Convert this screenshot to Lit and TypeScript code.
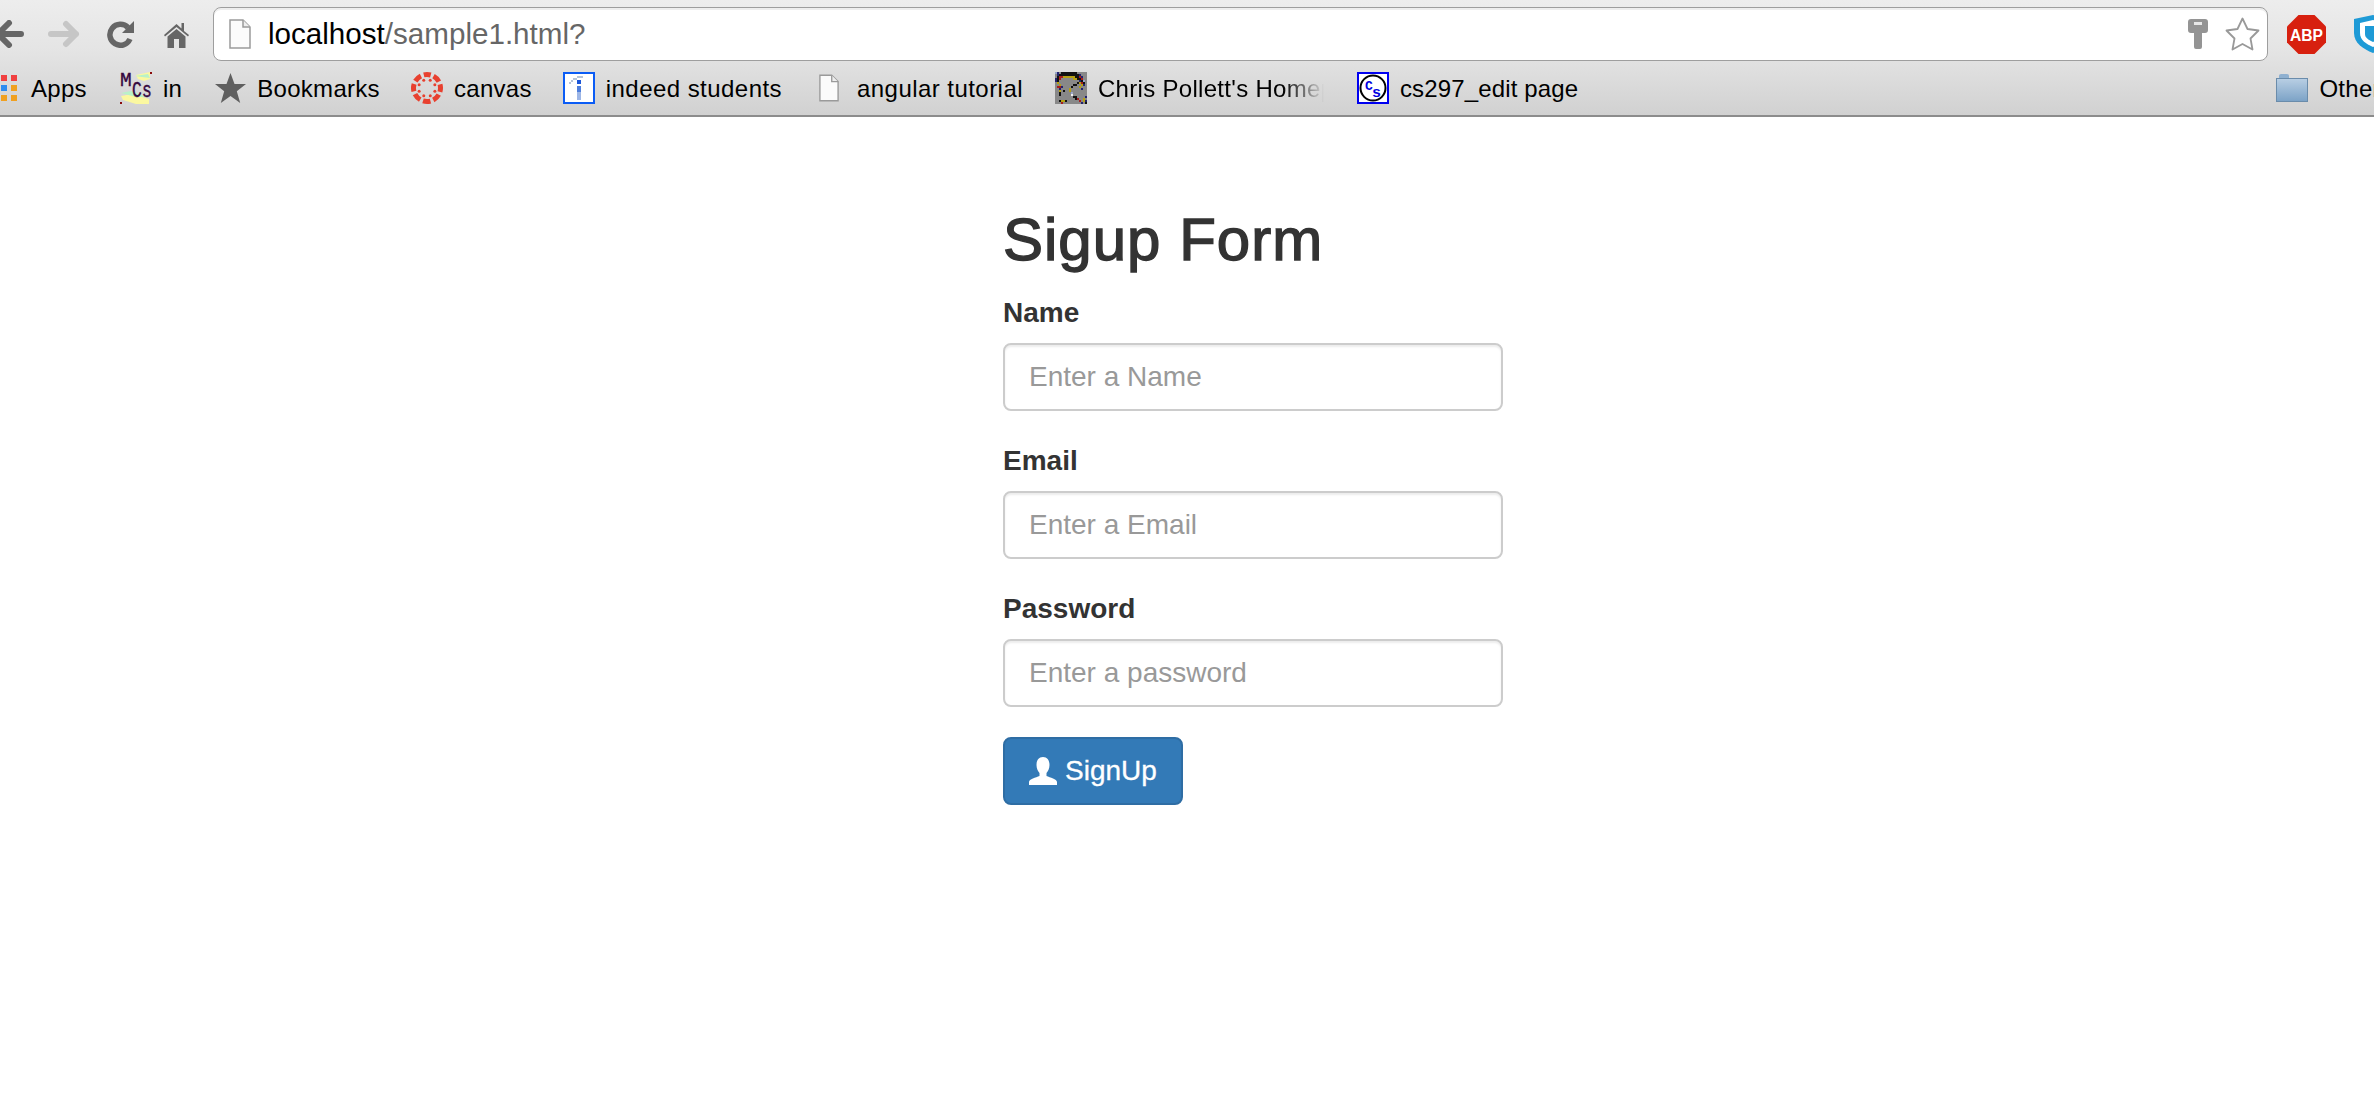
import { LitElement, html, css, svg } from "lit";
import { customElement } from "lit/decorators.js";

const palette: Record<string, string> = {
  k: "#111", r: "#a81c1c", y: "#b5a011", n: "#23236e", w: "#eee", l: "#9aa7c9",
};
const chris = [
  "ln.kkkkkkkk.....",
  ".nkkkkkkkkkkn...",
  ".krryyyyyykkrn..",
  "nkr......yykkr..",
  "nk..........nkl.",
  ".y.........kyrk.",
  "..y......kk..yn.",
  ".rrn....k...y...",
  "..n....y.....n..",
  "..y.k..y........",
  "..k.....l.......",
  "..k.....w.......",
  ".........kk....n",
  "..........kr..y.",
  "..kyyk......r.yn",
  "...r.........n.k",
];

const pixels = (rows: string[]) =>
  rows.flatMap((row, y) =>
    [...row].map((c, x) =>
      c === "." ? null : svg`<rect x=${x} y=${y} width="1" height="1" fill=${palette[c]}></rect>`
    )
  );

const canvasDots = [0, 45, 90, 135, 180, 225, 270, 315];

@customElement("app-root")
export class AppRoot extends LitElement {
  static styles = css`
    :host {
      display: block;
      min-height: 1111px;
      background: #fff;
      font-family: "Liberation Sans", Arial, sans-serif;
      overflow: hidden;
    }
    svg { display: block; flex: none; }
    .chrome {
      height: 117px;
      box-sizing: border-box;
      border-bottom: 2px solid #8c8c8c;
      background: linear-gradient(#ededed 0, #e4e4e4 45%, #d1d1d1 100%);
      display: flex;
      flex-direction: column;
      overflow: hidden;
    }
    .top { height: 68px; flex: none; display: flex; align-items: flex-start; }
    .back { margin: 20px 0 0 -8px; }
    .forward { margin: 20px 0 0 24px; }
    .reload { margin: 20px 0 0 27px; }
    .home { margin: 22px 0 0 30px; }
    .omni {
      margin: 7px 0 0 24px;
      width: 2055px;
      height: 54px;
      flex: none;
      box-sizing: border-box;
      background: #fff;
      border: 1.5px solid #9e9e9e;
      border-radius: 8px;
      box-shadow: inset 0 2px 0 #eeeeee;
      padding: 0 7px 0 15px;
      display: flex;
      align-items: center;
    }
    .url { margin-left: 17px; font-size: 29.6px; color: #000; white-space: nowrap; }
    .url span { color: #666; }
    .key { margin-left: auto; }
    .star { margin-left: 17px; }
    .abp { margin: 15px 0 0 19px; }
    .shield { margin: 15px 0 0 27px; }
    .bar { display: flex; align-items: center; height: 40px; flex: none; }
    .bm { display: flex; align-items: center; gap: 11px; flex: none; margin-right: 33px; font-size: 24px; letter-spacing: 0.3px; color: #000; white-space: nowrap; }
    .bm span { padding-top: 2px; }
    .tight { margin-right: 31px; }
    .wide { letter-spacing: 0.45px; }
    .snug { margin-right: 32px; }
    .apps { margin-left: -9px; gap: 14px; }
    .grid { display: grid; grid-template-columns: repeat(3, 6px); grid-auto-rows: 6px; gap: 4px; }
    .grid i { display: block; }
    .fade {
      width: 226px;
      overflow: hidden;
      -webkit-mask-image: linear-gradient(90deg, #000 82%, transparent 100%);
      mask-image: linear-gradient(90deg, #000 82%, transparent 100%);
    }
    .doc { margin: 0 7px 0 4px; }
    .small { letter-spacing: 0.15px; }
    .other { margin: 0 0 0 665px; }
    main {
      width: 500px;
      margin-left: 1003px;
      color: #333;
    }
    h1 {
      margin: 90px 0 20px;
      font-size: 60px;
      line-height: 66px;
      font-weight: 400;
      letter-spacing: 1px;
      -webkit-text-stroke: 1.4px #333;
    }
    .group { margin-bottom: 30px; }
    label {
      display: block;
      font-size: 28px;
      line-height: 40px;
      font-weight: 700;
      margin-bottom: 10px;
    }
    input {
      display: block;
      width: 100%;
      height: 68px;
      box-sizing: border-box;
      padding: 12px 24px;
      border: 2px solid #ccc;
      border-radius: 8px;
      background: #fff;
      box-shadow: inset 0 2px 2px rgba(0, 0, 0, 0.075);
      font: 28px "Liberation Sans", Arial, sans-serif;
      color: #555;
      outline: none;
    }
    input::placeholder { color: #999; opacity: 1; }
    button {
      display: inline-flex;
      align-items: center;
      height: 68px;
      box-sizing: border-box;
      padding: 0 24px;
      border: 2px solid #2e6da4;
      border-radius: 8px;
      background: #337ab7;
      color: #fff;
      font: 28px "Liberation Sans", Arial, sans-serif;
      -webkit-text-stroke: 0.3px #fff;
      gap: 8px;
    }
  `;

  private docIcon(w: number, h: number, cls = "") {
    return html`<svg class=${cls} width=${w} height=${h} viewBox="0 0 22 30">
      <path d="M1 1H14L21 8V29H1Z" fill="#fbfbfb" stroke="#9a9a9a" stroke-width="1.5"></path>
      <path d="M14 1V8H21" fill="#eee" stroke="#9a9a9a" stroke-width="1.5"></path>
    </svg>`;
  }

  render() {
    return html`
      <div class="chrome">
        <div class="top">
          <svg class="back" width="32" height="28" viewBox="0 0 32 28">
            <path d="M29 14H6M17 3 6 14 17 25" fill="none" stroke="#666" stroke-width="6" stroke-linecap="round" stroke-linejoin="round"></path>
          </svg>
          <svg class="forward" width="32" height="28" viewBox="0 0 32 28">
            <path d="M3 14H28M18 4 28 14 18 24" fill="none" stroke="#c6c6c6" stroke-width="6" stroke-linecap="round" stroke-linejoin="round"></path>
          </svg>
          <svg class="reload" width="27" height="28" viewBox="0 0 27 28">
            <path d="M21 7.5A10.5 10.5 0 1 0 23 19" fill="none" stroke="#666" stroke-width="5.5"></path>
            <path d="M27 1V13H15Z" fill="#666"></path>
          </svg>
          <svg class="home" width="25" height="26" viewBox="0 0 25 26">
            <path d="M0 13 12.5 2 17.5 6.5V1H20V9L25 13 24 14.5 12.5 5 1 14.500Z" fill="#666"></path>
            <path d="M3.500 14.500 12.500 7 21.500 14.500V26H15V17H10V26H3.500Z" fill="#666"></path>
          </svg>
          <div class="omni">
            ${this.docIcon(22, 30)}
            <div class="url">localhost<span>/sample1.html?</span></div>
            <svg class="key" width="20" height="30" viewBox="0 0 20 30">
              <path d="M3 0H17A3 3 0 0 1 20 3V11A3 3 0 0 1 17 14H14V28A2 2 0 0 1 12 30H8A2 2 0 0 1 6 28V14H3A3 3 0 0 1 0 11V3A3 3 0 0 1 3 0Z" fill="#949494"></path>
              <rect x="6" y="3" width="8" height="3" fill="#e8e8e8"></rect>
            </svg>
            <svg class="star" width="35" height="34" viewBox="0 0 35 34">
              <path d="M17.500 1.500 22.500 12 33.500 13.500 25.500 21.500 27.500 32.500 17.500 27 7.500 32.500 9.500 21.500 1.500 13.500 12.500 12Z" fill="#fff" stroke="#999" stroke-width="1.800" stroke-linejoin="round"></path>
            </svg>
          </div>
          <svg class="abp" width="39" height="39" viewBox="0 0 39 39">
            <path d="M11.500 0H27.500L39 11.500V27.500L27.500 39H11.500L0 27.500V11.500Z" fill="#d7200f"></path>
            <text x="19.500" y="25.500" text-anchor="middle" font-family="Liberation Sans" font-weight="700" font-size="16" textLength="33" lengthAdjust="spacingAndGlyphs" fill="#fff">ABP</text>
          </svg>
          <svg class="shield" width="40" height="38" viewBox="0 0 40 38">
            <path d="M1 4 20 0 39 4V18C39 28 30 34 20 38 10 34 1 28 1 18Z" fill="#1e9ad6"></path>
            <path d="M7 8 20 5 33 8V18C33 25 27 29 20 32 13 29 7 25 7 18Z" fill="#fff"></path>
            <path d="M12 11 28 11V19C28 23 24 25 20 27 16 25 12 23 12 19Z" fill="#1e9ad6"></path>
          </svg>
        </div>
        <div class="bar">
          <div class="bm apps">
            <div class="grid">
              <i style="background:#e0a030"></i><i style="background:#f04040"></i><i style="background:#f04040"></i>
              <i style="background:#40a050"></i><i style="background:#2d8cf0"></i><i style="background:#f0a020"></i>
              <i style="background:#f04040"></i><i style="background:#f0a020"></i><i style="background:#f0a020"></i>
            </div>
            <span>Apps</span>
          </div>
          <div class="bm">
            <svg width="32" height="32" viewBox="0 0 32 32">
              <path d="M16 3 30 0V7L24 9 18 7ZM1 24 12 22 29 27V32H16L3 28Z" fill="#fbf8a0"></path>
              <path d="M15 4 28 2 30 6 22 5ZM1 21 11 19 27 25 16 25Z" fill="#b9f2c8"></path>
              <rect x="30" y="0" width="2" height="2" fill="#8a0a0a"></rect>
              <rect x="0" y="30" width="2" height="2" fill="#8a0a0a"></rect>
              <text x="0" y="14" font-family="Liberation Mono" font-size="21" textLength="12" lengthAdjust="spacingAndGlyphs" fill="#35083f" stroke="#35083f" stroke-width="0.4">M</text>
              <text x="12" y="25" font-family="Liberation Mono" font-size="22" textLength="20" lengthAdjust="spacingAndGlyphs" fill="#35083f" stroke="#35083f" stroke-width="0.4">Cs</text>
            </svg>
            <span>in</span>
          </div>
          <div class="bm tight">
            <svg width="31" height="31" viewBox="0 0 31 31">
              <path d="M15.500 0 19.500 11H31L21.800 18.200 25.200 30 15.500 23 5.800 30 9.200 18.200 0 11H11.500Z" fill="#5f5f5f"></path>
            </svg>
            <span>Bookmarks</span>
          </div>
          <div class="bm tight">
            <svg width="32" height="32" viewBox="0 0 32 32">
              <circle cx="16" cy="16" r="13.500" fill="none" stroke="#e8402f" stroke-width="5" stroke-dasharray="7.600 3" stroke-dashoffset="3.800" transform="rotate(-90 16 16)"></circle>
              ${canvasDots.map((a) => {
                const r = (a * Math.PI) / 180;
                return svg`<circle cx=${16 + 8.5 * Math.cos(r + 0.39)} cy=${16 + 8.5 * Math.sin(r + 0.39)} r="1.500" fill="#e8402f"></circle>`;
              })}
            </svg>
            <span>canvas</span>
          </div>
          <div class="bm wide">
            <svg width="32" height="32" viewBox="0 0 16 16" shape-rendering="crispEdges">
              <rect width="16" height="16" fill="#0b5cf5"></rect>
              <rect x="1" y="1" width="14" height="14" fill="#fff"></rect>
              <path d="M3 5H4V4H5V3H7V2H10V3H7V4H5V5H4V6H3Z" fill="#b5c3d8"></path>
              <rect x="7" y="4" width="2" height="2" fill="#1c56d8"></rect>
              <rect x="7" y="7" width="2" height="3" fill="#4f7fdc"></rect>
              <rect x="7" y="10" width="2" height="4" fill="#9db6e6"></rect>
            </svg>
            <span>indeed students</span>
          </div>
          <div class="bm wide snug">
            ${this.docIcon(20, 28, "doc")}
            <span>angular tutorial</span>
          </div>
          <div class="bm">
            <svg width="32" height="32" viewBox="0 0 16 16" shape-rendering="crispEdges">
              <rect width="16" height="16" fill="#888"></rect>
              ${pixels(chris)}
            </svg>
            <span class="fade">Chris Pollett's Homepage</span>
          </div>
          <div class="bm small">
            <svg width="32" height="32" viewBox="0 0 32 32">
              <rect x="1" y="1" width="30" height="30" fill="#fff" stroke="#0000f0" stroke-width="2"></rect>
              <circle cx="16" cy="16" r="12.500" fill="none" stroke="#000" stroke-width="2"></circle>
              <text x="8" y="18" font-family="Liberation Mono" font-weight="700" font-size="13" fill="#0000e0">C</text>
              <text x="15" y="25" font-family="Liberation Mono" font-weight="700" font-size="15" fill="#0000e0">s</text>
            </svg>
            <span>cs297_edit page</span>
          </div>
          <div class="bm other">
            <svg width="32" height="28" viewBox="0 0 32 28">
              <defs>
                <linearGradient id="f" x1="0" y1="0" x2="0" y2="1">
                  <stop offset="0" stop-color="#b9cfe4"></stop>
                  <stop offset="1" stop-color="#7ba2c6"></stop>
                </linearGradient>
              </defs>
              <path d="M3 4V1.500Q3 0 5 0H11Q13 0 13 1.500V4Z" fill="#8fb0d0"></path>
              <rect x="0.500" y="4.500" width="31" height="23" fill="url(#f)" stroke="#6a8cab"></rect>
            </svg>
            <span>Other Bookmarks</span>
          </div>
        </div>
      </div>
      <main>
        <h1>Sigup Form</h1>
        <form>
          <div class="group">
            <label>Name</label>
            <input type="text" placeholder="Enter a Name" />
          </div>
          <div class="group">
            <label>Email</label>
            <input type="text" placeholder="Enter a Email" />
          </div>
          <div class="group">
            <label>Password</label>
            <input type="password" placeholder="Enter a password" />
          </div>
          <button type="button">
            <svg width="28" height="28" viewBox="0 0 28 28">
              <path d="M14 0C18.500 0 20.500 3.500 20.500 8 20.500 11.500 19 14.500 17.500 16V19C21 20.500 28 22 28 25V28H0V25C0 22 7 20.500 10.500 19V16C9 14.500 7.500 11.500 7.500 8 7.500 3.500 9.500 0 14 0Z" fill="#fff"></path>
            </svg>
            SignUp
          </button>
        </form>
      </main>
    `;
  }
}
